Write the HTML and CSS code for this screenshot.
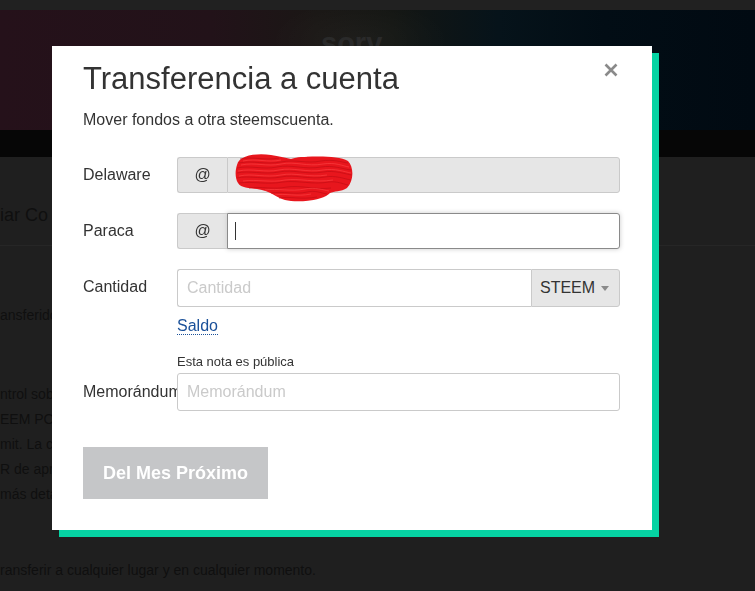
FILE: index.html
```html
<!DOCTYPE html>
<html lang="es">
<head>
    <meta charset="UTF-8">
    <meta name="viewport" content="width=device-width, initial-scale=1.0">
    <title>Transferencia a cuenta</title>
    <link rel="stylesheet" href="styles.css">
</head>
<body>
<div class="top-bar"></div>
<div class="banner">
    <h2>sorv</h2>
</div>
<div class="nav-bar"></div>

<div class="page">
    <h3 class="page-title">iar Co</h3>
    <p class="note">ansferido</p>
    <div class="lines">
        <p>ntrol sob</p>
        <p>EEM POW</p>
        <p>mit. La c</p>
        <p>R de apr</p>
        <p>más deta</p>
    </div>
    <p class="last">ransferir a cualquier lugar y en cualquier momento.</p>
</div>

<div class="reveal">
    <div class="modal">
        <div class="modal-head">
            <h4>Transferencia a cuenta</h4>
            <button class="close" type="button">
                <svg width="14" height="14" viewBox="0 0 14 14">
                    <path d="M1.5 1.5 L12.5 12.5 M12.5 1.5 L1.5 12.5" stroke="#8a8a8a" stroke-width="2.6" fill="none"/>
                </svg>
            </button>
        </div>
        <p class="lead">Mover fondos a otra steemscuenta.</p>

        <div class="row">
            <label>Delaware</label>
            <div class="input-group">
                <span class="addon">@</span>
                <div class="field readonly">
                    <!-- scribble over the account name -->
                    <svg class="scribble" width="118" height="50" viewBox="0 0 118 50">
                        <path d="M2 12 C4 2 22 0 36 2 C44 3 50 5 56 6 C60 5 62 4 66 4 C85 3 104 3 113 8 C119 14 119 28 112 35 C106 39 99 38 95 40 C88 48 62 50 50 47 C42 45 36 38 22 36 C14 35 6 35 3 30 C0 25 0 18 2 12 Z" fill="#e8161d"/>
                        <path d="M5 6 C18 3 30 8 44 5 M4 10 C18 7 30 12 46 9 C60 6 72 11 86 8 C98 6 106 9 113 10 M2 15 C16 12 28 17 42 14 C56 11 70 17 86 14 C98 12 108 16 116 17 M2 20 C14 17 28 22 44 19 C58 16 72 22 88 19 C100 17 110 21 117 22 M2 25 C14 22 30 27 46 24 C60 21 74 27 90 24 C100 22 110 26 116 27 M4 30 C18 28 32 32 48 29 C62 27 78 32 94 29 C102 28 108 31 113 32 M14 35 C26 33 38 37 52 34 C66 32 80 37 96 35 M36 40 C48 38 60 42 72 39 C80 37 86 40 92 41 M44 45 C54 43 66 47 82 44"
                              stroke="#c20c13" stroke-width=".9" fill="none" opacity=".75"/>
                        <path d="M8 8 C22 5 32 10 46 7 M6 12 C20 9 32 14 46 11 C60 8 72 14 88 11 C100 9 108 13 114 14 M3 18 C18 15 30 20 44 17 C58 14 72 20 88 17 C100 15 110 19 116 20 M4 23 C18 20 30 25 46 22 C60 19 74 25 92 22 M8 28 C22 26 36 30 50 27 C64 25 80 30 98 27 M30 37 C42 35 56 39 70 36 C80 34 88 37 94 38 M40 42 C50 40 62 44 76 41"
                              stroke="#ff4a4a" stroke-width=".9" fill="none" opacity=".6"/>
                    </svg>
                </div>
            </div>
        </div>

        <div class="row">
            <label>Paraca</label>
            <div class="input-group">
                <span class="addon">@</span>
                <div class="field focus"><span class="caret"></span></div>
            </div>
        </div>

        <div class="row">
            <label>Cantidad</label>
            <div class="col">
                <div class="input-group tall">
                    <input class="amount" type="text" placeholder="Cantidad">
                    <div class="select">
                        <span>STEEM</span>
                        <svg width="8" height="5" viewBox="0 0 8 5"><path d="M0 0 H8 L4 5 Z" fill="#8a8a8a"/></svg>
                    </div>
                </div>
                <a class="balance" href="#">Saldo</a>
            </div>
        </div>

        <div class="row memo">
            <label>Memorándum</label>
            <div class="col">
                <small>Esta nota es pública</small>
                <input class="memo-input" type="text" placeholder="Memorándum">
            </div>
        </div>

        <button class="btn" type="button">Del Mes Próximo</button>
    </div>
</div>
</body>
</html>
```

FILE: styles.css
```css
*, :after, :before {
    box-sizing: border-box;
}
body {
    margin: 0;
    background: #1f1f1f;
    font-family: "Liberation Sans", Arial, sans-serif;
    font-size: 16px;
    color: #333;
}
h1,h2,h3,h4,h5,h6,p {
    margin: 0;
}

/* page behind the dialog */
.top-bar {
    height: 10px;
    background: #212121;
}
.banner {
    height: 120px;
    padding: 17px 0 0 321px;
    overflow: hidden;
    background:
        radial-gradient(ellipse 90px 40px at 360px 30px, rgba(255,255,255,.03), transparent),
        linear-gradient(90deg, #25111a 0%, #221219 28%, #1a1715 42%, #141613 52%, #06131a 66%, #020d15 80%, #010a12 100%);
}
.banner h2 {
    font-size: 29px;
    line-height: 33px;
    font-weight: bold;
    color: #2a2a2a;
}
.nav-bar {
    height: 27px;
    background: #060606;
}
.page {
    color: #0f0f0f;
    font-size: 14px;
    white-space: nowrap;
}
.page-title {
    margin-top: 47px;
    padding-bottom: 19px;
    border-bottom: 1px solid #262626;
    font-size: 18px;
    line-height: 22px;
    font-weight: normal;
}
.note {
    margin-top: 59px;
    line-height: 20px;
}
.lines {
    margin-top: 57px;
}
.lines p {
    line-height: 25px;
}
.last {
    margin-top: 53px;
    line-height: 20px;
}

/* dialog */
.reveal {
    position: fixed;
    top: 46px;
    left: 52px;
}
.modal {
    width: 600px;
    padding: 15px 32px 31px 31px;
    background: #fff;
    box-shadow: 7px 7px 0 #05d3a3;
}
.modal-head {
    display: flex;
    justify-content: space-between;
    align-items: flex-start;
}
.modal-head h4 {
    font-size: 31px;
    line-height: 36px;
    font-weight: normal;
    color: #333;
}
.close {
    display: block;
    width: 14px;
    height: 14px;
    margin: 2px 2px 0 0;
    padding: 0;
    border: 0;
    background: none;
}
.close svg {
    display: block;
}
.lead {
    margin-top: 13px;
    line-height: 20px;
}
.row {
    display: flex;
    margin-top: 20px;
}
.lead + .row {
    margin-top: 27px;
}
.row label {
    display: flex;
    align-items: center;
    flex-shrink: 0;
    width: 94px;
    height: 36px;
    white-space: nowrap;
}
.row.memo {
    margin-top: 19px;
}
.row.memo label {
    align-self: flex-end;
    height: 38px;
}
.col {
    flex: 1;
    display: flex;
    flex-direction: column;
}
.input-group {
    flex: 1;
    display: flex;
    height: 36px;
}
.input-group.tall {
    flex: none;
    height: 38px;
}
.addon {
    display: flex;
    align-items: center;
    justify-content: center;
    width: 50px;
    background: #e6e6e6;
    border: 1px solid #cacaca;
    border-right: 0;
    border-radius: 3px 0 0 3px;
}
.field {
    position: relative;
    flex: 1;
    display: flex;
    align-items: center;
    padding-left: 7px;
    border: 1px solid #cacaca;
    border-radius: 0 3px 3px 0;
}
.field.readonly {
    background: #e6e6e6;
}
.field.focus {
    background: #fff;
    border-color: #8a8a8a;
    box-shadow: 0 0 5px #cacaca;
}
.caret {
    width: 1px;
    height: 18px;
    background: #333;
}
.scribble {
    position: absolute;
    top: -5px;
    left: 7px;
}
input {
    font: inherit;
    color: #333;
    margin: 0;
    outline: none;
}
input::placeholder {
    color: #cacaca;
}
.amount {
    flex: 1;
    min-width: 0;
    padding: 0 9px;
    border: 1px solid #cacaca;
    border-right: 0;
    border-radius: 3px 0 0 3px;
}
.select {
    display: flex;
    align-items: center;
    justify-content: space-between;
    width: 89px;
    padding: 0 10px 0 8px;
    background: #e6e6e6;
    border: 1px solid #cacaca;
    border-radius: 0 3px 3px 0;
}
.balance {
    align-self: flex-start;
    margin-top: 10px;
    line-height: 17px;
    color: #1a5099;
    text-decoration: none;
    border-bottom: 1px dotted #1a5099;
}
small {
    font-size: 13px;
    line-height: 16px;
}
.memo-input {
    height: 38px;
    margin-top: 3px;
    padding: 0 9px;
    border: 1px solid #cacaca;
    border-radius: 3px;
}
.btn {
    display: block;
    height: 52px;
    margin-top: 36px;
    padding: 0 20px;
    border: 0;
    background: #c5c6c8;
    color: #fff;
    font: bold 18px "Liberation Sans", Arial, sans-serif;
}
```
